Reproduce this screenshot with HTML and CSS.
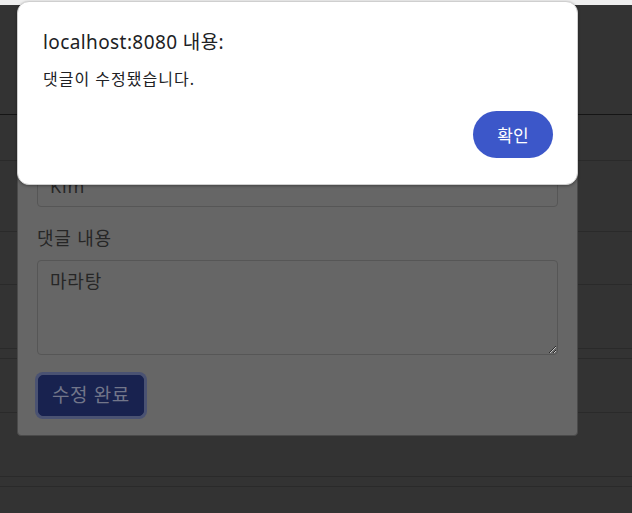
FILE: index.html
```html
<!DOCTYPE html>
<html lang="ko">
<head>
    <meta charset="UTF-8">
    <meta name="viewport" content="width=device-width, initial-scale=1.0">
    <title>댓글 수정</title>
    <link rel="stylesheet" href="styles.css">
</head>
<body>
    <div class="page">
        <div class="top-strip"></div>
        <div class="row row-header"></div>
        <div class="row" style="height: 45px"></div>
        <div class="row" style="height: 70px"></div>
        <div class="row" style="height: 52px"></div>
        <div class="row" style="height: 63px"></div>
        <div class="row" style="height: 9px"></div>
        <div class="row" style="height: 53px"></div>
        <div class="row" style="height: 63px"></div>
        <div class="row" style="height: 9px"></div>
    </div>

    <!-- edit modal, dimmed behind the alert -->
    <div class="modal">
        <div class="form-group">
            <input type="text" class="form-control" value="Kim">
        </div>
        <div class="form-group form-group-last">
            <label class="form-label">댓글 내용</label>
            <textarea class="form-control comment-box">마라탕</textarea>
        </div>
        <button class="btn-save">수정 완료</button>
    </div>

    <div class="alert-dialog">
        <p class="alert-title">localhost:8080 내용:</p>
        <p class="alert-message">댓글이 수정됐습니다.</p>
        <div class="alert-actions">
            <button class="btn-ok">확인</button>
        </div>
    </div>
</body>
</html>
```

FILE: styles.css
```css
body {
    margin: 0;
    font-family: "Noto Sans", "Noto Sans CJK KR", sans-serif;
    background-color: #333;
    height: 513px;
    overflow: hidden;
}

.page {
    display: flex;
    flex-direction: column;
}

.top-strip {
    height: 5px;
    background-color: #efefef;
}

.row {
    border-bottom: 1px solid #2a2a2a;
}

.row-header {
    height: 109px;
    border-bottom: 1px solid #151515;
}

.modal {
    position: absolute;
    left: 17px;
    top: 138px;
    width: 521px;
    padding: 26px 19px 19px 19px;
    background-color: #666;
    border: 1px solid #4a4a4a;
    border-radius: 4px;
}

.form-group {
    margin-bottom: 18px;
}

.form-group-last {
    margin-bottom: 20px;
}

.form-label {
    display: block;
    font-size: 18px;
    line-height: 26px;
    letter-spacing: 0.8px;
    color: #262626;
    margin-bottom: 9px;
}

.form-control {
    display: block;
    box-sizing: border-box;
    width: 100%;
    padding: 8px 12px;
    font-family: inherit;
    font-size: 18px;
    line-height: 24px;
    letter-spacing: 0.8px;
    color: #262626;
    background-color: #666;
    border: 1px solid #565656;
    border-radius: 4px;
    outline: none;
}

.comment-box {
    height: 95px;
    resize: vertical;
}

.btn-save {
    margin-left: 1px;
    padding: 7px 13px;
    font-family: inherit;
    font-size: 19px;
    line-height: 25px;
    letter-spacing: 0.6px;
    color: #72768a;
    background-color: #18224f;
    border: 1px solid #18224f;
    border-radius: 5px;
    box-shadow: 0 0 0 3px #4a5272;
}

.alert-dialog {
    position: absolute;
    left: 17px;
    top: 1px;
    width: 561px;
    height: 184px;
    background-color: #fff;
    border: 1px solid #cfcfcf;
    border-radius: 12px;
    box-shadow: 0 1px 3px rgba(0, 0, 0, 0.35);
    box-sizing: border-box;
    padding: 28px 24px 0 25px;
}

.alert-title {
    margin: 0;
    font-size: 19px;
    line-height: 24px;
    letter-spacing: 0.4px;
    color: #202124;
}

.alert-message {
    margin: 14px 0 0 0;
    font-size: 16px;
    line-height: 22px;
    letter-spacing: 1px;
    color: #202124;
}

.alert-actions {
    display: flex;
    justify-content: flex-end;
    margin-top: 21px;
}

.btn-ok {
    width: 80px;
    height: 47px;
    font-family: inherit;
    font-size: 17px;
    color: #fff;
    background-color: #3c57c9;
    border: none;
    border-radius: 24px;
}
```
